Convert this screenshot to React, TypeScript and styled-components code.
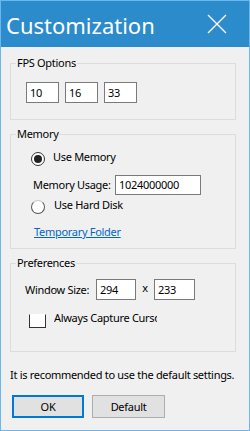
import React from "react";
import styled, { createGlobalStyle } from "styled-components";

const Global = createGlobalStyle`
  html, body { margin: 0; padding: 0; background: #f0f0f0; }
  body { font-family: "Noto Sans", "DejaVu Sans", sans-serif; font-size: 11px; letter-spacing: -0.3px; color: #000; }
  * { box-sizing: border-box; }
`;

const Window = styled.div`
  width: 250px;
  height: 431px;
  border: 1px solid #6cb6e9;
  background: #f0f0f0;
  display: flex;
  flex-direction: column;
  overflow: hidden;
`;

const TitleBar = styled.div`
  height: 46px;
  background: #2b8bcb;
  display: flex;
  align-items: center;
  justify-content: space-between;
  padding: 0 22px 0 5px;
  flex-shrink: 0;
`;

const Title = styled.div`
  color: #fff;
  font-family: "Noto Sans", sans-serif;
  font-size: 22px;
  letter-spacing: 0;
  line-height: 28px;
  margin-top: 1px;
`;

const CloseIcon = styled.svg`
  width: 20px;
  height: 20px;
  display: block;
`;

const Body = styled.div`
  display: flex;
  flex-direction: column;
  padding: 9px 0 0 9px;
`;

const Group = styled.fieldset`
  width: 226px;
  margin: 0 0 7px 0;
  padding: 0;
  border: 1px solid #dcdcdc;
  min-inline-size: 0;
`;

const Legend = styled.legend`
  margin-left: 5px;
  padding: 0 1px;
  line-height: 14px;
  height: 14px;
`;

const GroupContent = styled.div<{ $pt: number; $pb: number; $pl: number }>`
  display: flex;
  flex-direction: column;
  padding: ${(p) => p.$pt}px 0 ${(p) => p.$pb}px ${(p) => p.$pl}px;
`;

const Row = styled.div<{ $gap?: number; $mt?: number }>`
  display: flex;
  align-items: center;
  gap: ${(p) => p.$gap ?? 0}px;
  margin-top: ${(p) => p.$mt ?? 0}px;
`;

const TextBox = styled.div<{ $w: number; $h?: number }>`
  width: ${(p) => p.$w}px;
  height: ${(p) => p.$h ?? 21}px;
  background: #fff;
  border: 1px solid #7a7a7a;
  padding: 0 3px;
  display: flex;
  align-items: center;
  line-height: 14px;
`;

const Radio = styled.span<{ $checked?: boolean }>`
  width: 14px;
  height: 14px;
  border-radius: 50%;
  border: 1px solid ${(p) => (p.$checked ? "#333" : "#555")};
  border-top-color: ${(p) => (p.$checked ? "#333" : "#c8c8c8")};
  background: #fff;
  display: flex;
  align-items: center;
  justify-content: center;
  flex-shrink: 0;
  &::after {
    content: "";
    display: ${(p) => (p.$checked ? "block" : "none")};
    width: 8px;
    height: 8px;
    border-radius: 50%;
    background: #222;
  }
`;

const Label = styled.span<{ $w?: number; $dy?: number; $ml?: number; $center?: boolean }>`
  display: inline-block;
  ${(p) => (p.$w ? `width: ${p.$w}px;` : "")}
  margin-left: ${(p) => p.$ml ?? 0}px;
  text-align: ${(p) => (p.$center ? "center" : "left")};
  position: relative;
  top: ${(p) => p.$dy ?? 0}px;
  white-space: nowrap;
  line-height: 14px;
`;

const Clip = styled.span<{ $w: number; $dy?: number; $ml?: number }>`
  display: inline-block;
  width: ${(p) => p.$w}px;
  overflow: hidden;
  white-space: nowrap;
  line-height: 14px;
  margin-left: ${(p) => p.$ml ?? 0}px;
  position: relative;
  top: ${(p) => p.$dy ?? 0}px;
`;

const Link = styled.a`
  color: #0066cc;
  text-decoration: underline;
  line-height: 14px;
  margin-left: 3px;
  cursor: pointer;
`;

const Check = styled.span`
  width: 17px;
  height: 14px;
  margin-left: 4px;
  background: #fff;
  border: 1px solid #333;
  border-top-color: transparent;
  flex-shrink: 0;
`;

const Note = styled.div`
  margin-top: 9px;
  line-height: 14px;
  white-space: nowrap;
`;

const Buttons = styled.div`
  display: flex;
  gap: 8px;
  margin: 13px 0 0 2px;
`;

const Button = styled.button<{ $primary?: boolean }>`
  width: ${(p) => (p.$primary ? 72 : 73)}px;
  height: 23px;
  background: #e1e1e1;
  border: ${(p) => (p.$primary ? "2px solid #0078d7" : "1px solid #adadad")};
  font-family: inherit;
  font-size: 11px;
  letter-spacing: -0.3px;
  color: #000;
  padding: 0;
`;

export default function App() {
  return (
    <>
      <Global />
      <Window>
        <TitleBar>
          <Title>Customization</Title>
          <CloseIcon viewBox="0 0 20 20">
            <path d="M1 1 L19 19 M19 1 L1 19" stroke="#fff" strokeWidth="1.4" fill="none" />
          </CloseIcon>
        </TitleBar>
        <Body>
          <Group>
            <Legend>FPS Options</Legend>
            <GroupContent $pt={12} $pb={16} $pl={15}>
              <Row $gap={6}>
                <TextBox $w={33}>10</TextBox>
                <TextBox $w={33}>16</TextBox>
                <TextBox $w={33}>33</TextBox>
              </Row>
            </GroupContent>
          </Group>
          <Group>
            <Legend>Memory</Legend>
            <GroupContent $pt={11} $pb={9} $pl={20}>
              <Row>
                <Radio $checked />
                <Label $ml={8} $dy={-2}>Use Memory</Label>
              </Row>
              <Row $mt={9}>
                <Label $w={82} $ml={2}>Memory Usage:</Label>
                <TextBox $w={86} $h={20}>1024000000</TextBox>
              </Row>
              <Row $mt={5}>
                <Radio />
                <Label $ml={9} $dy={-2}>Use Hard Disk</Label>
              </Row>
              <Row $mt={11}>
                <Link>Temporary Folder</Link>
              </Row>
            </GroupContent>
          </Group>
          <Group>
            <Legend>Preferences</Legend>
            <GroupContent $pt={9} $pb={23} $pl={14}>
              <Row>
                <Label $w={71}>Window Size:</Label>
                <TextBox $w={40}>294</TextBox>
                <Label $w={18} $dy={-2} $center>x</Label>
                <TextBox $w={41}>233</TextBox>
              </Row>
              <Row $mt={14}>
                <Check />
                <Clip $w={103} $ml={8} $dy={-3}>Always Capture Cursor</Clip>
              </Row>
            </GroupContent>
          </Group>
          <Note>It is recommended to use the default settings.</Note>
          <Buttons>
            <Button $primary>OK</Button>
            <Button>Default</Button>
          </Buttons>
        </Body>
      </Window>
    </>
  );
}
